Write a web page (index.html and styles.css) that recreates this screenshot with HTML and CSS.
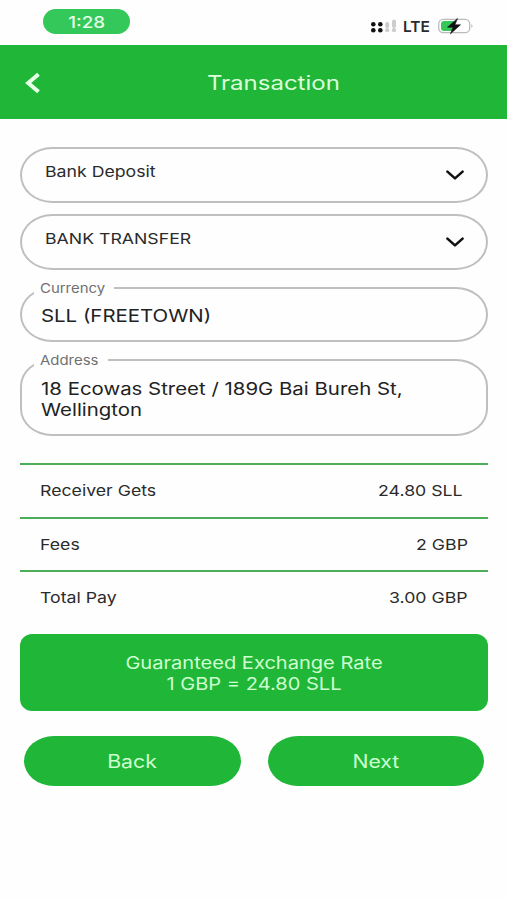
FILE: index.html
```
<!DOCTYPE html>
<html lang="en">
    <head>
        <meta charset="UTF-8">
        <meta name="viewport" content="width=device-width, initial-scale=1.0">
        <title>Transaction</title>
        <link rel="stylesheet" href="styles.css">
    </head>
    <body>

        <!-- Status bar -->
        <div class="status-bar">
            <div class="clock"><span class="wide">1:28</span></div>
            <div class="status-icons">
                <svg class="signal" width="27" height="14" viewBox="0 0 27 14">
                    <g fill="#111">
                        <circle cx="3.3" cy="5.2" r="2.3"/><circle cx="10.3" cy="5.2" r="2.3"/>
                        <circle cx="3.3" cy="11.2" r="2.3"/><circle cx="10.3" cy="11.2" r="2.3"/>
                    </g>
                    <g fill="#ccc">
                        <rect x="15.2" y="3" width="4" height="6" rx="2"/><rect x="22" y="0.5" width="4" height="8.5" rx="2"/>
                        <circle cx="17.2" cy="11.2" r="2.1"/><circle cx="24" cy="11.2" r="2.1"/>
                    </g>
                </svg>
                <span class="network"><span class="wide">LTE</span></span>
                <svg class="battery" width="37" height="18" viewBox="0 0 37 18">
                    <rect x="1.7" y="2.3" width="31" height="13.4" rx="4.5" fill="#fff" stroke="#b9bdb9" stroke-width="1.3"/>
                    <path d="M7 4h10v10H7q-3 0-3-3V7q0-3 3-3z" fill="#35c759"/>
                    <path d="M34.4 7q2.3 2 0 4z" fill="#b9bdb9"/>
                    <path d="M20.5 1.5L10.5 10.2h5.6L13.5 16.8L23.5 7.8h-5.6z" fill="#111" stroke="#111" stroke-width="0.6"/>
                </svg>
            </div>
        </div>

        <div class="header">
            <svg class="back-arrow" width="16" height="22" viewBox="0 0 16 22">
                <path d="M13.5 2.3L3.2 11L13.5 19.7" fill="none" stroke="#e8ffe8" stroke-width="4"/>
            </svg>
            <h1><span class="wide">Transaction</span></h1>
        </div>

        <div class="container">
            <div class="select">
                <span class="wide">Bank Deposit</span>
                <svg width="20" height="12" viewBox="0 0 20 12">
                    <path d="M2.4 2.6L10 9.4L17.6 2.6" fill="none" stroke="#111" stroke-width="2.6" stroke-linecap="round" stroke-linejoin="round"/>
                </svg>
            </div>
            <div class="select">
                <span class="wide">BANK TRANSFER</span>
                <svg width="20" height="12" viewBox="0 0 20 12">
                    <path d="M2.4 2.6L10 9.4L17.6 2.6" fill="none" stroke="#111" stroke-width="2.6" stroke-linecap="round" stroke-linejoin="round"/>
                </svg>
            </div>

            <div class="field currency">
                <label class="label-currency"><span class="wide">Currency</span></label>
                <span class="wide">SLL (FREETOWN)</span>
            </div>
            <div class="field address">
                <label class="label-address"><span class="wide">Address</span></label>
                <span class="wide">18 Ecowas Street / 189G Bai Bureh St,<br>Wellington</span>
            </div>

            <!-- Summary -->
            <div class="summary">
                <div class="row receiver"><span class="wide">Receiver Gets</span><span class="wide value">24.80 SLL</span></div>
                <div class="row"><span class="wide">Fees</span><span class="wide value">2 GBP</span></div>
                <div class="row"><span class="wide">Total Pay</span><span class="wide value">3.00 GBP</span></div>
            </div>

            <div class="rate">
                <span class="wide">Guaranteed Exchange Rate<br>1 GBP = 24.80 SLL</span>
            </div>

            <div class="buttons">
                <button><span class="wide">Back</span></button>
                <button><span class="wide">Next</span></button>
            </div>
        </div>
    </body>
</html>
```
FILE: styles.css
```
* {
    box-sizing: border-box;
}

body {
    margin: 0;
    background: #fefefe;
    color: #2b2b2b;
    font-family: Inter, "Liberation Sans", sans-serif;
    font-size: 15px;
}

/* Extended lettering */
.wide {
    display: inline-block;
    transform: scaleX(1.18);
    transform-origin: left center;
    white-space: nowrap;
}

/* Status bar */
.status-bar {
    height: 45px;
    padding: 9px 33px 0 43px;
    display: flex;
    justify-content: space-between;
    align-items: flex-start;
}

.clock {
    width: 87px;
    height: 25px;
    border-radius: 13px;
    background: #34c759;
    color: #e4ffe8;
    font-size: 16px;
    font-weight: 500;
    line-height: 26px;
    text-align: center;
}

.clock .wide,
h1 .wide,
.rate .wide,
button .wide {
    transform-origin: center;
}

.status-icons {
    display: flex;
    align-items: center;
    height: 34px;
}

.network {
    width: 28px;
    margin: 0 6px 0 6px;
    font-size: 15px;
    font-weight: 600;
}

.network .wide {
    transform: scaleX(1.03);
}

/* Header */
.header {
    height: 74px;
    background: #20b637;
    display: flex;
    align-items: center;
    padding: 2px 25px 0;
}

h1 {
    flex: 1;
    margin: 0;
    padding-left: 23px;
    color: #dcffdc;
    font-size: 20px;
    font-weight: 400;
    text-align: center;
}

h1 .wide {
    transform: scaleX(1.2);
}

.container {
    padding: 28px 19px 0 20px;
}

/* Selects */
.select {
    height: 56px;
    margin-bottom: 11px;
    padding: 0 21px 0 23px;
    border: 2px solid #bfbfbf;
    border-radius: 32px / 28px;
    display: flex;
    justify-content: space-between;
    align-items: center;
}

.select .wide {
    margin-top: -7px;
}

/* Fields with a label on the border */
.field {
    position: relative;
    padding-left: 19px;
    border: 2px solid #bfbfbf;
    border-radius: 32px / 27px;
    color: #222;
    font-size: 17px;
    line-height: 21px;
}

.field > .wide {
    transform: scaleX(1.2);
}

.field label {
    position: absolute;
    top: -10px;
    left: 12px;
    height: 16px;
    padding-left: 6px;
    background: #fefefe;
    color: #707070;
    font-size: 13px;
    line-height: 18px;
}

.field label .wide {
    transform: scaleX(1.15);
}

.label-currency {
    width: 80px;
}

.label-address {
    width: 74px;
}

.currency {
    height: 55px;
    margin-top: 17px;
    padding-top: 17px;
}

.address {
    height: 77px;
    margin-top: 17px;
    padding-top: 18px;
}

/* Summary */
.summary {
    margin-top: 27px;
}

.row {
    height: 53.5px;
    padding: 0 20px 0 20px;
    border-top: 2px solid #4cae58;
    display: flex;
    justify-content: space-between;
    align-items: center;
}

.receiver {
    padding-right: 25px;
}

.value {
    transform-origin: right center;
}

/* Exchange rate */
.rate {
    height: 77px;
    margin-top: 10px;
    padding-top: 19px;
    border-radius: 12px;
    background: #20b637;
    color: #cdffd0;
    font-size: 17px;
    line-height: 21px;
    text-align: center;
}

/* Buttons */
.buttons {
    display: flex;
    gap: 27px;
    margin: 25px 4px 0;
}

button {
    flex: 1;
    height: 50px;
    padding: 2px 0 0;
    border: none;
    border-radius: 30px / 25px;
    background: #20b637;
    color: #cdffd0;
    font-family: inherit;
    font-size: 18px;
}
```
